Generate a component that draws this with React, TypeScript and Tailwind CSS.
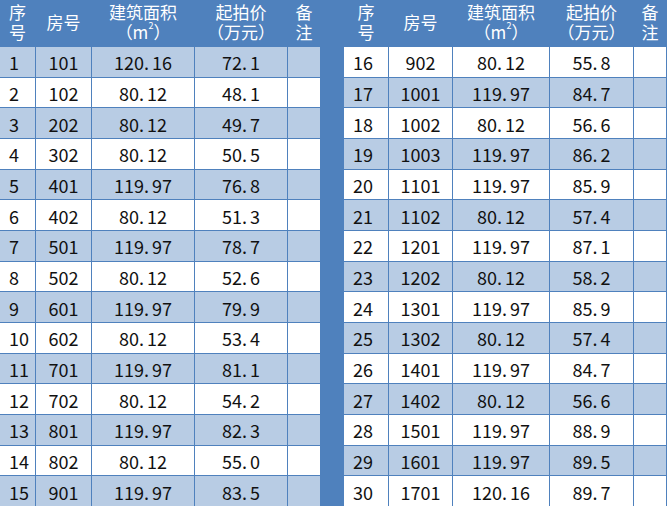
import React from "react";

type Row = [number, string, string, string];

const leftRows: Row[] = [
  [1, "101", "120.16", "72.1"],
  [2, "102", "80.12", "48.1"],
  [3, "202", "80.12", "49.7"],
  [4, "302", "80.12", "50.5"],
  [5, "401", "119.97", "76.8"],
  [6, "402", "80.12", "51.3"],
  [7, "501", "119.97", "78.7"],
  [8, "502", "80.12", "52.6"],
  [9, "601", "119.97", "79.9"],
  [10, "602", "80.12", "53.4"],
  [11, "701", "119.97", "81.1"],
  [12, "702", "80.12", "54.2"],
  [13, "801", "119.97", "82.3"],
  [14, "802", "80.12", "55.0"],
  [15, "901", "119.97", "83.5"],
];

const rightRows: Row[] = [
  [16, "902", "80.12", "55.8"],
  [17, "1001", "119.97", "84.7"],
  [18, "1002", "80.12", "56.6"],
  [19, "1003", "119.97", "86.2"],
  [20, "1101", "119.97", "85.9"],
  [21, "1102", "80.12", "57.4"],
  [22, "1201", "119.97", "87.1"],
  [23, "1202", "80.12", "58.2"],
  [24, "1301", "119.97", "85.9"],
  [25, "1302", "80.12", "57.4"],
  [26, "1401", "119.97", "84.7"],
  [27, "1402", "80.12", "56.6"],
  [28, "1501", "119.97", "88.9"],
  [29, "1601", "119.97", "89.5"],
  [30, "1701", "120.16", "89.7"],
];

// decimal point in the source font has a wide gap after it
const Num = ({ v }: { v: string }) => {
  const [a, b] = v.split(".");
  if (b === undefined) return <>{v}</>;
  return (
    <>
      {a}.<span className="ml-[3px]">{b}</span>
    </>
  );
};

const headCell = "flex flex-col items-center justify-center text-center text-white text-[17px] leading-[20px] pb-[2px]";
const bodyCell = "flex items-center justify-center text-[18px] text-[#111] pt-[2px]";

const PriceTable = ({ rows, cols }: { rows: Row[]; cols: string }) => (
  <div className={`grid ${cols} grid-rows-[46px_repeat(15,1fr)] gap-px h-[506px] bg-[#4f81bd]`}>
    <div className={headCell}>
      <span className="block h-[20px]">序</span>
      <span className="block h-[20px]">号</span>
    </div>
    <div className={headCell}>
      <span className="block h-[20px]">房号</span>
    </div>
    <div className={headCell}>
      <span className="block h-[20px]">建筑面积</span>
      <span className="block h-[20px]">
        （m<sup className="text-[9px] align-top leading-[16px]">2</sup>）
      </span>
    </div>
    <div className={headCell}>
      <span className="block h-[20px]">起拍价</span>
      <span className="block h-[20px]">（万元）</span>
    </div>
    <div className={headCell}>
      <span className="block h-[20px]">备</span>
      <span className="block h-[20px]">注</span>
    </div>
    {rows.map(([no, room, area, price]) => {
      const bg = no % 2 === 1 ? "bg-[#b8cce4]" : "bg-white";
      return (
        <React.Fragment key={no}>
          <div className={`${bodyCell} ${bg} justify-start pl-[9px]`}>{no}</div>
          <div className={`${bodyCell} ${bg}`}>{room}</div>
          <div className={`${bodyCell} ${bg}`}>
            <Num v={area} />
          </div>
          <div className={`${bodyCell} ${bg}`}>
            <Num v={price} />
          </div>
          <div className={`${bodyCell} ${bg}`}></div>
        </React.Fragment>
      );
    })}
  </div>
);

export default function App() {
  return (
    <div
      className="flex w-[667px] h-[506px] overflow-hidden bg-[#4f81bd] gap-[24px]"
      style={{ fontFamily: '"Noto Sans CJK SC", "Noto Sans", sans-serif' }}
    >
      <PriceTable rows={leftRows} cols="grid-cols-[35px_55px_102px_92px_32px]" />
      <PriceTable rows={rightRows} cols="grid-cols-[44px_63px_96px_83px_32px]" />
    </div>
  );
}
